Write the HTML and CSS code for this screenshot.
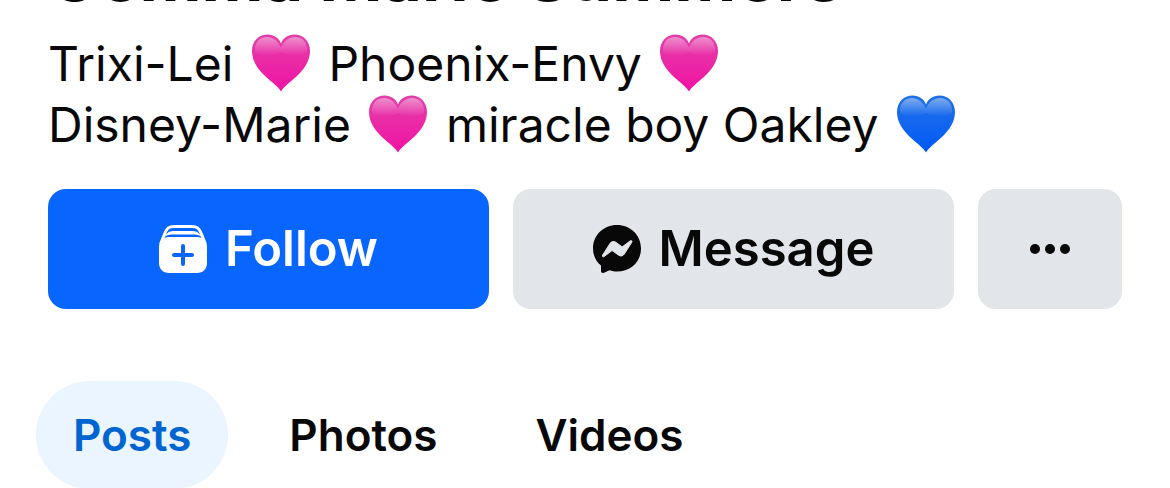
FILE: index.html
```html
<!DOCTYPE html>
<html lang="en">
<head>
<meta charset="utf-8">
<meta name="viewport" content="width=device-width, initial-scale=1">
<title>Gemma Marie Summers</title>
<link rel="stylesheet" href="styles.css">
</head>
<body>
<svg class="defs" aria-hidden="true">
  <defs>
    <linearGradient id="pink" x1="0" y1="0" x2="0" y2="1">
      <stop offset="0" stop-color="#e23fa9"/><stop offset=".45" stop-color="#ea2ba6"/><stop offset="1" stop-color="#f012a4"/>
    </linearGradient>
    <linearGradient id="blue" x1="0" y1="0" x2="0" y2="1">
      <stop offset="0" stop-color="#1f6fe6"/><stop offset=".45" stop-color="#1467ef"/><stop offset="1" stop-color="#0059f5"/>
    </linearGradient>
    <linearGradient id="shine" x1="0" y1="0" x2="0" y2="1">
      <stop offset="0" stop-color="#fff" stop-opacity=".42"/><stop offset="1" stop-color="#fff" stop-opacity="0"/>
    </linearGradient>
    <symbol id="heart" viewBox="0 0 58 58">
      <path d="M29 57.500C25 49 0 38 0 17C0 7 7 .5 15.500 .5C22 .5 27 4 29 9.500C31 4 36 .5 42.500 .5C51 .5 58 7 58 17C58 38 33 49 29 57.500Z"/>
      <path fill="url(#shine)" d="M3 18C2 8 8 3 15 3C22 3 27 8 29 14C31 8 36 3 43 3C50 3 56 8 55 18C49 23 36 22 29 18C22 22 9 23 3 18Z"/>
    </symbol>
  </defs>
</svg>
<main class="profile">
  <h1 class="name">Gemma Marie Summers</h1>
  <p class="bio">Trixi-Lei <svg class="heart pink" role="img" aria-label="pink heart"><use href="#heart"/></svg> Phoenix-Envy <svg class="heart pink" role="img" aria-label="pink heart"><use href="#heart"/></svg><br>Disney-Marie <svg class="heart pink" role="img" aria-label="pink heart"><use href="#heart"/></svg> miracle boy Oakley <svg class="heart blue" role="img" aria-label="blue heart"><use href="#heart"/></svg></p>
  <div class="actions">
    <button class="button primary" type="button">
      <svg class="icon" viewBox="0 0 48 48" aria-hidden="true">
        <path fill="currentColor" d="M10 12H38C44 12 48 16 48 22V38C48 44 44 48 38 48H10C4 48 0 44 0 38V22C0 16 4 12 10 12Z"/>
        <path fill="none" stroke="currentColor" stroke-width="3" stroke-linecap="round" d="M2 18L6 8C8 3 10 1.500 15 1.500H33C38 1.500 40 3 42 8L46 18"/>
        <path fill="currentColor" d="M7 9.500C9 7 11 6 15 6H33C37 6 39 7 41 9.500L43 12C40 10 37 9.500 33 9.500H15C11 9.500 8 10 5 12Z"/>
        <path class="plus" d="M24 21V39M15 30H33"/>
      </svg>
      Follow
    </button>
    <button class="button" type="button">
      <svg class="icon" viewBox="0 0 48 48" aria-hidden="true">
        <path fill="currentColor" d="M24 0C10.500 0 0 10 0 23.500C0 30.500 3 36.500 8 40.500V46C8 47.500 9.500 48.400 11 47.700L16.500 45.300C19 46.200 21.500 46.500 24 46.500C37.500 46.500 48 37 48 23.500C48 10 37.500 0 24 0Z"/>
        <path class="bolt" d="M9.700 30L17.200 18.200C18.400 16.300 21 15.800 22.800 17.200L28.300 21.300C28.900 21.700 29.500 21.700 30 21.300L37.300 15.800C38.500 15 39.500 16.200 38.700 17.400L31.200 29.200C30 31.100 27.400 31.500 25.600 30.200L20 26.100C19.500 25.700 18.900 25.700 18.300 26.100L11 31.600C9.900 32.400 8.900 31.300 9.700 30Z"/>
      </svg>
      Message
    </button>
    <button class="button more" type="button" aria-label="More options">
      <svg class="icon" viewBox="0 0 48 48" aria-hidden="true"><g fill="currentColor"><circle cx="9" cy="24" r="5"/><circle cx="24" cy="24" r="5"/><circle cx="39" cy="24" r="5"/></g></svg>
    </button>
  </div>
  <nav class="tabs" aria-label="Profile sections">
    <a class="tab active" href="#posts" aria-current="page">Posts</a>
    <a class="tab" href="#photos">Photos</a>
    <a class="tab" href="#videos">Videos</a>
  </nav>
</main>
</body>
</html>
```
FILE: styles.css
```css
* { box-sizing: border-box; }
body {
  margin: 0;
  overflow: hidden;
  background: #fff;
  color: #080809;
  font-family: Inter, "Liberation Sans", sans-serif;
}
.defs { position: absolute; width: 0; height: 0; }
.profile { display: flow-root; padding: 0 48px; }
.name {
  margin: -68px 0 0;
  font-size: 68px;
  line-height: 88px;
  font-weight: 700;
  white-space: nowrap;
}
.bio {
  margin: 13px 0 0;
  font-size: 48px;
  line-height: 61px;
  white-space: nowrap;
}
.heart { width: 58px; height: 58px; margin: 0 5px; vertical-align: -11px; }
.pink { fill: url(#pink); }
.blue { fill: url(#blue); }
.actions { display: flex; gap: 24px; margin-top: 34px; }
.button {
  flex: 1;
  display: flex;
  align-items: center;
  justify-content: center;
  gap: 18px;
  height: 120px;
  padding: 0;
  border: 0;
  border-radius: 18px;
  background: #e2e5e9;
  color: #080809;
  font: 600 49px/60px Inter, "Liberation Sans", sans-serif;
}
.primary { background: #0866ff; color: #fff; }
.more { flex: 0 0 144px; }
.icon { width: 48px; height: 48px; }
.plus { fill: none; stroke: #0866ff; stroke-width: 4; stroke-linecap: round; }
.bolt { fill: #e2e5e9; stroke: #e2e5e9; stroke-width: 1; }
.tabs { display: flex; gap: 24px; margin: 72px -12px 0; }
.tab {
  padding: 24px 37px;
  border-radius: 54px;
  color: #080809;
  font-size: 44px;
  line-height: 60px;
  font-weight: 600;
  text-decoration: none;
}
.active { background: #ebf5ff; color: #0064d1; }
```
